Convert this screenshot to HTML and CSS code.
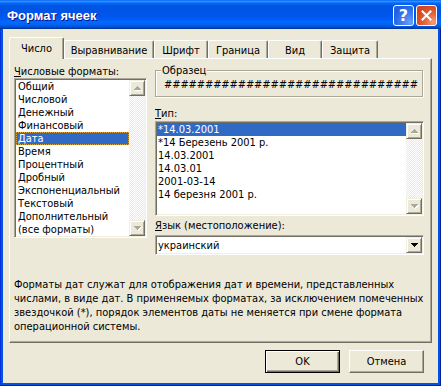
FILE: index.html
```html
<!DOCTYPE html>
<html lang="ru">
<head>
    <meta charset="UTF-8">
    <title>Формат ячеек</title>
    <link rel="stylesheet" href="styles.css">
</head>
<body>

<div class="window">
    <div class="titlebar">
        <span class="title">Формат ячеек</span>
        <div class="caption-buttons">
            <button class="cap-btn help">?</button>
            <button class="cap-btn close">
                <svg width="11" height="11" viewBox="0 0 11 11"><path d="M1.5 1.5 L9.5 9.5 M9.5 1.5 L1.5 9.5" stroke="#fff" stroke-width="2" stroke-linecap="square"/></svg>
            </button>
        </div>
    </div>

    <div class="client">
        <div class="tabs">
            <div class="tab active t-number">Число</div>
            <div class="tab t-align">Выравнивание</div>
            <div class="tab t-font">Шрифт</div>
            <div class="tab t-border">Граница</div>
            <div class="tab t-view">Вид</div>
            <div class="tab t-protect">Защита</div>
        </div>

        <div class="panel">
            <div class="columns">
                <div class="col-left">
                    <div class="label"><u>Ч</u>исловые форматы:</div>
                    <div class="listbox formats">
                        <ul class="items">
                            <li>Общий</li>
                            <li>Числовой</li>
                            <li>Денежный</li>
                            <li>Финансовый</li>
                            <li class="selected focused">Дата</li>
                            <li>Время</li>
                            <li>Процентный</li>
                            <li>Дробный</li>
                            <li>Экспоненциальный</li>
                            <li>Текстовый</li>
                            <li>Дополнительный</li>
                            <li>(все форматы)</li>
                        </ul>
                        <div class="vscroll">
                            <div class="sb-btn"><svg width="7" height="4" viewBox="0 0 7 4"><polygon points="3.5,0 7,4 0,4" fill="#aca899"/></svg></div>
                            <div class="sb-track"></div>
                            <div class="sb-btn"><svg width="7" height="4" viewBox="0 0 7 4"><polygon points="0,0 7,0 3.5,4" fill="#aca899"/></svg></div>
                        </div>
                    </div>
                </div>

                <div class="col-right">
                    <div class="groupbox">
                        <span class="legend">Образец</span>
                        <div class="sample">###############################</div>
                    </div>

                    <div class="label gap-type"><u>Т</u>ип:</div>
                    <div class="listbox types">
                        <ul class="items">
                            <li class="selected">*14.03.2001</li>
                            <li>*14 Березень 2001 р.</li>
                            <li>14.03.2001</li>
                            <li>14.03.01</li>
                            <li>2001-03-14</li>
                            <li>14 березня 2001 р.</li>
                        </ul>
                        <div class="vscroll">
                            <div class="sb-btn"><svg width="7" height="4" viewBox="0 0 7 4"><polygon points="3.5,0 7,4 0,4" fill="#aca899"/></svg></div>
                            <div class="sb-track"></div>
                            <div class="sb-btn"><svg width="7" height="4" viewBox="0 0 7 4"><polygon points="0,0 7,0 3.5,4" fill="#aca899"/></svg></div>
                        </div>
                    </div>

                    <div class="label gap-lang"><u>Я</u>зык (местоположение):</div>
                    <div class="combo">
                        <span class="combo-text">украинский</span>
                        <div class="sb-btn drop"><svg width="7" height="4" viewBox="0 0 7 4"><polygon points="0,0 7,0 3.5,4" fill="#000"/></svg></div>
                    </div>
                </div>
            </div>

            <p class="hint">Форматы дат служат для отображения дат и времени, представленных<br>числами, в виде дат. В применяемых форматах, за исключением помеченных<br>звездочкой (*), порядок элементов даты не меняется при смене формата<br>операционной системы.</p>
        </div>

        <div class="buttons">
            <button class="btn default">OK</button>
            <button class="btn">Отмена</button>
        </div>
    </div>
</div>

</body>
</html>
```

FILE: styles.css
```css
* {
    box-sizing: border-box;
    margin: 0;
    padding: 0;
}

body {
    background: #fff;
    color: #000;
    font-family: "DejaVu Sans Condensed", "DejaVu Sans", sans-serif;
    font-stretch: semi-condensed;
    font-size: 11px;
    line-height: 13px;
}

button {
    font: inherit;
    color: inherit;
    cursor: default;
}

/* window frame */

.window {
    width: 441px;
    height: 386px;
    display: flex;
    flex-direction: column;
    background: #0054e3;
    box-shadow: inset 1px 0 #0831d9, inset -1px 0 #001ea0, inset 0 -1px #001ea0;
}

.titlebar {
    height: 29px;
    flex: none;
    display: flex;
    align-items: center;
    justify-content: space-between;
    padding: 0 4px 0 7px;
    background: linear-gradient(to bottom, #0058ee 0%, #3593ff 4%, #288eff 6%, #127dff 8%, #036ffc 10%, #0262ee 14%, #0057e5 20%, #0054e3 24%, #0055eb 56%, #005bf5 66%, #026afe 76%, #0062ef 86%, #0052d6 92%, #0040ab 97%, #003092 100%);
}

.title {
    font: bold 13px "Liberation Sans", sans-serif;
    color: #fff;
    text-shadow: 1px 1px #0f1089;
    padding-top: 1px;
}

.caption-buttons {
    display: flex;
    gap: 2px;
    padding-top: 1px;
}

.cap-btn {
    width: 21px;
    height: 21px;
    border: 1px solid #fff;
    border-radius: 3px;
    display: flex;
    align-items: center;
    justify-content: center;
}

.help {
    background: radial-gradient(circle at 85% 85%, #6a9ffc 0, #3d7ef2 35%, #2260e4 75%);
    color: #fff;
    font: bold 16px "DejaVu Sans", sans-serif;
    line-height: 19px;
}

.close {
    background: radial-gradient(circle at 85% 85%, #f5a07a 0, #e5663c 35%, #d5461f 75%);
}

.client {
    flex: 1;
    margin: 0 3px 3px;
    background: #ece9d8;
    padding: 8px 6px 0;
}

/* tabs */

.tabs {
    display: flex;
    align-items: flex-end;
    height: 22px;
    margin-bottom: -1px;
}

.tab {
    height: 18px;
    margin-bottom: 1px;
    padding-top: 3px;
    text-align: center;
    background: #ece9d8;
    border-top: 1px solid #fff;
    border-left: 1px solid #fff;
    border-right: 1px solid #716f64;
    border-radius: 2px 2px 0 0;
    box-shadow: inset -1px 0 #aca899;
}

.tab.active {
    height: 22px;
    margin-bottom: 0;
    padding-top: 4px;
    position: relative;
    z-index: 1;
}

.t-number { width: 55px; }
.t-align { width: 90px; }
.t-font { width: 54px; }
.t-border { width: 60px; }
.t-view { width: 54px; }
.t-protect { width: 56px; }

.panel {
    width: 423px;
    height: 285px;
    padding: 6px 7px 0 4px;
    border: 1px solid;
    border-color: #fff #716f64 #716f64 #fff;
    box-shadow: inset -1px -1px #aca899;
}

.columns {
    display: flex;
    gap: 8px;
    height: 190px;
}

.col-left {
    width: 133px;
}

.col-right {
    width: 269px;
}

.label {
    height: 13px;
    white-space: nowrap;
}

.gap-type { margin-top: 10px; }
.gap-lang { margin-top: 3px; }

/* list boxes */

.listbox {
    display: flex;
    padding: 1px;
    background: #fff;
    border: 1px solid;
    border-color: #aca899 #fff #fff #aca899;
    box-shadow: inset 1px 1px #716f64, inset -1px -1px #f1efe2;
}

.formats { height: 160px; }

.types {
    height: 95px;
    margin-top: 1px;
}

.items {
    flex: 1;
    list-style: none;
}

.items li {
    height: 13px;
    padding-left: 2px;
    white-space: nowrap;
}

.types .items li { padding-left: 1px; }

.items li.selected {
    background: #316ac5;
    color: #fff;
}

.items li.focused {
    outline: 1px dotted #d9a441;
    outline-offset: -1px;
}

.vscroll {
    width: 16px;
    display: flex;
    flex-direction: column;
}

.sb-btn {
    width: 16px;
    height: 16px;
    flex: none;
    display: flex;
    align-items: center;
    justify-content: center;
    background: #ece9d8;
    border: 1px solid;
    border-color: #f1efe2 #716f64 #716f64 #f1efe2;
    box-shadow: inset 1px 1px #fff, inset -1px -1px #aca899;
}

.sb-btn svg {
    shape-rendering: crispEdges;
    filter: drop-shadow(1px 1px 0 #fff);
}

.sb-btn.drop svg { filter: none; }

.sb-track {
    flex: 1;
    background: repeating-conic-gradient(#fff 0 25%, #ece9d8 0 50%) 0 0 / 2px 2px;
}

/* group box */

.groupbox {
    position: relative;
    width: 268px;
    height: 27px;
    margin-top: 5px;
    border: 1px solid #aca899;
    box-shadow: inset 1px 1px #fff, 1px 1px #fff;
}

.legend {
    position: absolute;
    top: -7px;
    left: 5px;
    padding: 0 1px;
    background: #ece9d8;
}

.sample {
    padding: 7px 0 0 8px;
    letter-spacing: -0.1px;
    white-space: nowrap;
}

/* combo */

.combo {
    display: flex;
    align-items: center;
    height: 20px;
    margin-top: 3px;
    padding: 1px;
    background: #fff;
    border: 1px solid;
    border-color: #aca899 #fff #fff #aca899;
    box-shadow: inset 1px 1px #716f64, inset -1px -1px #f1efe2;
}

.combo-text {
    flex: 1;
    padding-left: 1px;
}

/* description */

.hint {
    margin-top: 23px;
    line-height: 14px;
    white-space: nowrap;
}

/* buttons */

.buttons {
    display: flex;
    justify-content: flex-end;
    gap: 9px;
    margin: 7px 8px 0 0;
}

.btn {
    width: 75px;
    height: 23px;
    background: #ece9d8;
    border: 1px solid;
    border-color: #fff #716f64 #716f64 #fff;
    box-shadow: inset -1px -1px #aca899;
}

.btn.default {
    border-color: #000;
    box-shadow: inset 1px 1px #fff, inset -1px -1px #716f64, inset -2px -2px #aca899;
}
```
